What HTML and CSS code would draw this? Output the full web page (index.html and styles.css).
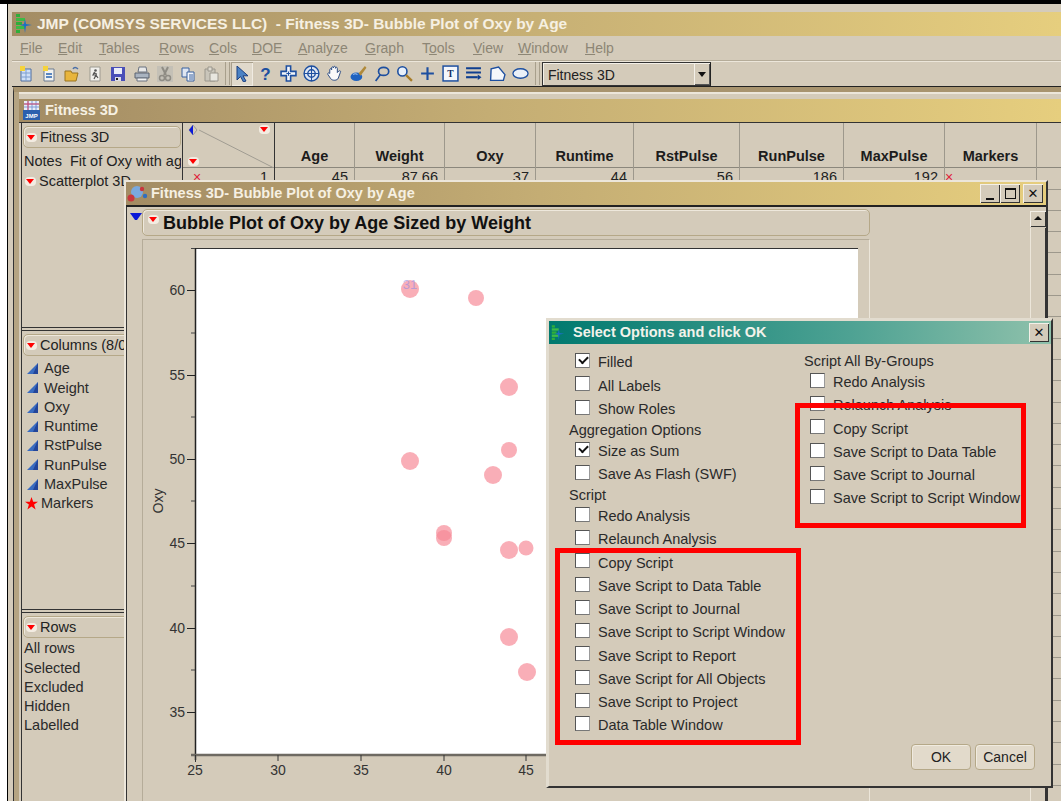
FILE: index.html
```html
<!DOCTYPE html>
<html lang="en">
<head>
<meta charset="utf-8">
<title>JMP - Fitness 3D</title>
<link rel="stylesheet" href="styles.css">
</head>
<body>
<svg class="defs" width="0" height="0" aria-hidden="true">
  <defs>
    <symbol id="jmp-logo" viewBox="0 0 18 20">
      <rect x="1" y="0" width="4" height="3" fill="#2fae3a"/><rect x="1" y="4" width="9" height="3" fill="#3dbb45"/>
      <rect x="1" y="8" width="6" height="3" fill="#2fae3a"/><rect x="1" y="12" width="9" height="3" fill="#3dbb45"/>
      <rect x="1" y="16" width="4" height="3" fill="#2fae3a"/>
      <path d="M10 5 11 10 17 11 11 12 10 19 9 12 5 11 9 10Z" fill="#1c6fc4"/>
    </symbol>
    <symbol id="ramp" viewBox="0 0 13 13">
      <path d="M12 1V12H1Z" fill="#3a6cc0"/><path d="M12 1V12H7Z" fill="#23459a"/>
    </symbol>
  </defs>
</svg>

<div class="top-edge"></div>
<div class="app">
  <div class="titlebar app-title">
    <svg class="logo"><use href="#jmp-logo"/></svg>
    <span>JMP (COMSYS SERVICES LLC)&nbsp; - Fitness 3D- Bubble Plot of Oxy by Age</span>
  </div>
  <nav class="menubar">
    <span class="m-file"><u>F</u>ile</span><span class="m-edit"><u>E</u>dit</span><span class="m-tables"><u>T</u>ables</span><span class="m-rows"><u>R</u>ows</span><span class="m-cols"><u>C</u>ols</span><span class="m-doe"><u>D</u>OE</span><span class="m-analyze"><u>A</u>nalyze</span><span class="m-graph"><u>G</u>raph</span><span class="m-tools">T<u>o</u>ols</span><span class="m-view"><u>V</u>iew</span><span class="m-window"><u>W</u>indow</span><span class="m-help"><u>H</u>elp</span>
  </nav>
  <div class="toolbar">
    <div class="tools">
      <svg viewBox="0 0 16 16"><path d="M3 3h10v12H3Z" fill="#cfe0f5" stroke="#4f6f9f"/><path d="M3 7h10M3 11h10M8 3v12" stroke="#7f9fd0"/><path d="M2 0h5v5H2Z" fill="#f5d33c"/></svg>
      <svg viewBox="0 0 16 16"><path d="M3 3h10v12H3Z" fill="#f2f2ef" stroke="#6b7a90"/><path d="M5 8h6M5 11h6" stroke="#5a86c0" stroke-width="2"/><path d="M2 0h5v5H2Z" fill="#f5d33c"/></svg>
      <svg viewBox="0 0 16 16"><path d="M1 5h6l1 2h6l-2 8H1Z" fill="#e8b53c" stroke="#9a7420"/><path d="M9 3c1-2 3-2 5 0" fill="none" stroke="#4a6fa8" stroke-width="1.4"/></svg>
      <svg viewBox="0 0 16 16"><path d="M3 1h10v14H3Z" fill="#f1f0ec" stroke="#9d9a90"/><circle cx="8.500" cy="4.500" r="1.300" fill="#555"/><path d="M8 6 6 9h3l-2 4M9 9l2 3M6 7l4 1" fill="none" stroke="#555" stroke-width="1.200"/></svg>
      <svg viewBox="0 0 16 16"><path d="M1 1h14v14H1Z" fill="#4a4fb8"/><path d="M4 2h8v6H4Z" fill="#e9ecf8"/><path d="M5 11h6v4H5Z" fill="#dcdce8"/><path d="M6 12h2v2H6Z" fill="#222"/></svg>
      <svg viewBox="0 0 16 16"><path d="M5 1h7l1 5H4Z" fill="#e8e8e8" stroke="#6a7280"/><path d="M1 7h14v5H1Z" fill="#a9b3c0" stroke="#5a6270"/><path d="M3 12h10v3H3Z" fill="#f2f2f2" stroke="#6a7280"/></svg>
      <svg viewBox="0 0 16 16"><rect x="0" y="0" width="16" height="16" fill="#c4c0b6"/><path d="M5 1 9 9M11 1 7 9" stroke="#8f8c84" stroke-width="2"/><circle cx="5" cy="12" r="2.500" fill="none" stroke="#8f8c84" stroke-width="1.500"/><circle cx="11" cy="12" r="2.500" fill="none" stroke="#8f8c84" stroke-width="1.500"/></svg>
      <svg viewBox="0 0 16 16"><path d="M2 2h7v9H2Z" fill="#dfe6f2" stroke="#38609f"/><path d="M7 6h7v9H7Z" fill="#f5f7fb" stroke="#38609f"/><path d="M9 9h4M9 11h4M9 13h4" stroke="#38609f"/></svg>
      <svg viewBox="0 0 16 16"><path d="M2 3h10v12H2Z" fill="#c9c5ba" stroke="#9a968c"/><path d="M5 1h4v4H5Z" fill="#dedad0" stroke="#9a968c"/><path d="M7 7h8v8H7Z" fill="#e8e6df" stroke="#9a968c"/></svg>
    </div>
    <div class="tool-sep"></div>
    <div class="tools tools-b">
      <div class="tool-on"><svg viewBox="0 0 16 16"><path d="M3 0V14L6.500 10.500 9.500 16 12 15 9 9.800H14Z" fill="#4b82c4" stroke="#1c3f80"/></svg></div>
      <svg viewBox="0 0 16 16"><text class="ico-q" x="8" y="14" text-anchor="middle">?</text></svg>
      <svg viewBox="0 0 16 16"><path d="M6 1h4v5h5v4h-5v5H6v-5H1V6h5Z" fill="#f4f7fb" stroke="#1d4fa0" stroke-width="1.500"/><path d="M8 6v4M6 8h4" stroke="#1d4fa0"/></svg>
      <svg viewBox="0 0 16 16"><circle cx="8" cy="8" r="7" fill="#dde6f3" stroke="#1d4fa0" stroke-width="1.300"/><circle cx="8" cy="8" r="3.500" fill="none" stroke="#1d4fa0" stroke-width="1.300"/><path d="M8 1v14M1 8h14" stroke="#1d4fa0"/></svg>
      <svg viewBox="0 0 18 18"><path d="M4 9V5c0-1.500 2-1.500 2 0V3c0-1.500 2-1.500 2 0V2.500c0-1.500 2-1.500 2 0V3.500c0-1.500 2-1.500 2 0V8l1.500-1.500c1.200-1 2.500 0 1.700 1.300L13 14c-1 2.500-6 3-8 .5L2 10c-.8-1.300 1-2.300 2-1Z" fill="#fafafa" stroke="#23457f"/></svg>
      <svg viewBox="0 0 16 16"><ellipse cx="6" cy="11" rx="5.500" ry="4" fill="#1f62c0"/><path d="M8 8 14 1l1.500 1.500L10 10Z" fill="#b08a3a"/><path d="M3 9c1-1 3-1 4 0" stroke="#9fc3ee" fill="none"/></svg>
      <svg viewBox="0 0 16 16"><ellipse cx="10" cy="6" rx="4.800" ry="3.800" fill="none" stroke="#1d4fa0" stroke-width="1.600"/><path d="M7 9 2.500 15" stroke="#1d4fa0" stroke-width="1.600"/></svg>
      <svg viewBox="0 0 16 16"><circle cx="6" cy="6" r="4.300" fill="#e8f0fa" stroke="#1d4fa0" stroke-width="1.500"/><path d="M9.500 9.500 15 15" stroke="#a87c28" stroke-width="2.200"/></svg>
      <svg viewBox="0 0 16 16"><path d="M8 2v12M2 8h12" stroke="#1d4fa0" stroke-width="2"/></svg>
      <svg viewBox="0 0 16 16"><rect x="1" y="1" width="14" height="14" fill="#f3f6fb" stroke="#1d4fa0" stroke-width="1.400"/><text class="ico-t" x="8" y="11.500" text-anchor="middle">T</text></svg>
      <svg viewBox="0 0 16 16"><path d="M1 3h14M1 7h14" stroke="#0f3f90" stroke-width="2"/><path d="M1 11.500h11" stroke="#0f3f90" stroke-width="2"/><path d="M12 9v5l3.500-2.500Z" fill="#0f3f90"/></svg>
      <svg viewBox="0 0 16 16"><path d="M1.500 14.500 2 3.500 9 2l6 7-1.500 5.500Z" fill="#f4f7fb" stroke="#1d4fa0" stroke-width="1.300"/></svg>
      <svg viewBox="0 0 18 16"><ellipse cx="9" cy="8" rx="8" ry="5" fill="#eaf0f8" stroke="#1d4fa0" stroke-width="1.400"/></svg>
    </div>
    <div class="tool-sep tool-sep-b"></div>
    <div class="combo"><span class="combo-value">Fitness 3D</span><span class="combo-btn"></span></div>
  </div>

  <div class="desk">
    <div class="titlebar doc-title">
      <svg class="doc-icon" viewBox="0 0 17 19"><rect x="1" y="0" width="15" height="10" fill="#e8eef9"/><path d="M1 3h15M1 6h15M5 0v10M9 0v10M13 0v10" stroke="#7d9ad6"/><path d="M1 3h15M5 0v10" stroke="#d8466a"/><rect x="0" y="9" width="17" height="10" fill="#2b5fae"/><text class="ico-jmp" x="8.500" y="17" text-anchor="middle">JMP</text></svg>
      <span>Fitness 3D</span>
    </div>
    <div class="table-wrap">
      <aside class="side">
        <section class="side-sec sec-top">
          <h3 class="side-head"><i class="pop"></i>Fitness 3D</h3>
          <p class="side-line notes">Notes&nbsp; Fit of Oxy with age</p>
          <p class="side-line script-line"><i class="pop"></i>Scatterplot 3D</p>
        </section>
        <section class="side-sec sec-cols">
          <h3 class="side-head"><i class="pop"></i>Columns (8/0)</h3>
          <ul class="col-list">
            <li><svg class="ramp"><use href="#ramp"/></svg>Age</li>
            <li><svg class="ramp"><use href="#ramp"/></svg>Weight</li>
            <li><svg class="ramp"><use href="#ramp"/></svg>Oxy</li>
            <li><svg class="ramp"><use href="#ramp"/></svg>Runtime</li>
            <li><svg class="ramp"><use href="#ramp"/></svg>RstPulse</li>
            <li><svg class="ramp"><use href="#ramp"/></svg>RunPulse</li>
            <li><svg class="ramp"><use href="#ramp"/></svg>MaxPulse</li>
            <li><svg class="ramp star" viewBox="0 0 14 14"><path d="M7 0 8.800 5H14L9.800 8.200 11.400 13.500 7 10.300 2.600 13.500 4.200 8.200 0 5H5.200Z" fill="#f00"/></svg>Markers</li>
          </ul>
        </section>
        <section class="side-sec sec-rows">
          <h3 class="side-head"><i class="pop"></i>Rows</h3>
          <ul class="row-list">
            <li>All rows</li><li>Selected</li><li>Excluded</li><li>Hidden</li><li>Labelled</li>
          </ul>
        </section>
      </aside>
      <div class="sheet">
        <div class="sheet-row sheet-head">
          <div class="corner">
            <svg viewBox="0 0 92 45" width="92" height="45"><path d="M16 7 91 45" stroke="#a09c92"/><path d="M6 7 10 2 14 7 10 12Z" fill="#d4cbba" stroke="#999"/><path d="M6 7 10 2V12Z" fill="#0a18d8"/></svg>
            <i class="pop pop-tr"></i><i class="pop pop-bl"></i>
          </div>
          <div>Age</div><div>Weight</div><div>Oxy</div><div>Runtime</div><div>RstPulse</div><div>RunPulse</div><div>MaxPulse</div><div>Markers</div><div></div>
        </div>
        <div class="sheet-row sheet-data">
          <div class="row-no"><em>×</em>1</div><div>45</div><div>87.66</div><div>37</div><div>44</div><div>56</div><div>186</div><div>192</div><div class="marker">×</div><div></div>
        </div>
      </div>
    </div>
  </div>
</div>

<div class="bubble-win">
  <div class="titlebar bubble-title">
    <svg class="bubble-icon" viewBox="0 0 22 18"><circle cx="10" cy="7" r="6" fill="#7aa9de"/><circle cx="4" cy="13" r="3.500" fill="#c9373d"/><circle cx="15" cy="4" r="2.200" fill="#c9373d"/><circle cx="18" cy="11" r="2.200" fill="#2f6fc0"/></svg>
    <span>Fitness 3D- Bubble Plot of Oxy by Age</span>
    <div class="win-btns">
      <button class="win-btn" type="button"><i class="glyph-min"></i></button><button class="win-btn" type="button"><i class="glyph-max"></i></button><button class="win-btn win-close" type="button">✕</button>
    </div>
  </div>
  <div class="bubble-body">
    <div class="disclose"><i></i></div>
    <div class="report">
      <h2 class="report-head"><i class="pop"></i>Bubble Plot of Oxy by Age Sized by Weight</h2>
      <div class="plot-panel">
        <svg class="plot" viewBox="0 0 729 560" width="729" height="560">
          <rect x="52" y="8" width="663" height="506" fill="#fff"/>
          <path d="M50 8.500H715" stroke="#333"/>
          <path d="M52.500 8V520" stroke="#222" stroke-width="1.500"/>
          <path d="M48 515H715" stroke="#6e6a62" stroke-width="2.500"/>
          <path d="M44 50.500h8M44 135.500h8M44 219.500h8M44 303.500h8M44 388.500h8M44 472.500h8" stroke="#222"/>
          <path d="M48 8.500h4M48 93h4M48 177h4M48 261h4M48 346h4M48 430h4" stroke="#444"/>
          <path d="M52.500 515v7M135 515v6M218 515v6M301 515v6M383 515v6" stroke="#333"/>
          <g class="bubbles">
            <circle cx="267" cy="49" r="9"/><circle cx="333" cy="58" r="8"/>
            <circle cx="366" cy="147" r="9"/><circle cx="366" cy="210" r="8"/>
            <circle cx="267" cy="221" r="9"/><circle cx="350" cy="235" r="9"/>
            <circle cx="301" cy="293" r="8"/><circle cx="301" cy="298" r="8"/>
            <circle cx="366" cy="310" r="9"/><circle cx="383" cy="308" r="7.500"/>
            <circle cx="366" cy="397" r="9"/><circle cx="384" cy="432" r="9"/>
          </g>
          <text class="point-label" x="267" y="49" text-anchor="middle">31</text>
          <g class="tick-y" text-anchor="end">
            <text x="42" y="55">60</text><text x="42" y="140">55</text><text x="42" y="224">50</text><text x="42" y="308">45</text><text x="42" y="393">40</text><text x="42" y="477">35</text>
          </g>
          <g class="tick-x" text-anchor="middle">
            <text x="52" y="535">25</text><text x="135" y="535">30</text><text x="218" y="535">35</text><text x="301" y="535">40</text><text x="383" y="535">45</text>
          </g>
          <text class="tick-y" transform="translate(20 261) rotate(-90)" text-anchor="middle">Oxy</text>
        </svg>
      </div>
    </div>
    <div class="scroll-col">
      <div class="scroll-up"></div>
      <div class="scroll-track"></div>
    </div>
  </div>
</div>

<div class="dialog">
  <div class="dialog-title">
    <svg class="dialog-logo"><use href="#jmp-logo"/></svg>
    <span>Select Options and click OK</span>
    <button class="win-btn dlg-close" type="button">✕</button>
  </div>
  <div class="dialog-cols">
    <div class="opt-col">
      <label class="opt"><i class="cb on"></i>Filled</label>
      <label class="opt"><i class="cb"></i>All Labels</label>
      <label class="opt"><i class="cb"></i>Show Roles</label>
      <div class="opt-head">Aggregation Options</div>
      <label class="opt"><i class="cb on"></i>Size as Sum</label>
      <label class="opt"><i class="cb"></i>Save As Flash (SWF)</label>
      <div class="opt-head">Script</div>
      <label class="opt"><i class="cb"></i>Redo Analysis</label>
      <label class="opt"><i class="cb"></i>Relaunch Analysis</label>
      <label class="opt"><i class="cb"></i>Copy Script</label>
      <label class="opt"><i class="cb"></i>Save Script to Data Table</label>
      <label class="opt"><i class="cb"></i>Save Script to Journal</label>
      <label class="opt"><i class="cb"></i>Save Script to Script Window</label>
      <label class="opt"><i class="cb"></i>Save Script to Report</label>
      <label class="opt"><i class="cb"></i>Save Script for All Objects</label>
      <label class="opt"><i class="cb"></i>Save Script to Project</label>
      <label class="opt"><i class="cb"></i>Data Table Window</label>
    </div>
    <div class="opt-col opt-col-b">
      <div class="opt-head">Script All By-Groups</div>
      <label class="opt"><i class="cb"></i>Redo Analysis</label>
      <label class="opt"><i class="cb"></i>Relaunch Analysis</label>
      <label class="opt"><i class="cb"></i>Copy Script</label>
      <label class="opt"><i class="cb"></i>Save Script to Data Table</label>
      <label class="opt"><i class="cb"></i>Save Script to Journal</label>
      <label class="opt"><i class="cb"></i>Save Script to Script Window</label>
    </div>
  </div>
  <div class="dialog-actions">
    <button class="btn" type="button">OK</button>
    <button class="btn" type="button">Cancel</button>
  </div>
  <div class="callout callout-a"></div>
  <div class="callout callout-b"></div>
</div>
</body>
</html>
```

FILE: styles.css
```css
* { box-sizing: border-box; }

html, body {
  margin: 0;
  height: 801px;
  overflow: hidden;
}

body {
  position: relative;
  width: 1061px;
  background: #fff;
  font: 14.5px/1 "Liberation Sans", Arial, sans-serif;
  color: #222;
}

h2, h3, p, ul { margin: 0; padding: 0; list-style: none; font-weight: normal; }
i, em { font-style: normal; }

.defs { position: absolute; }

.top-edge { height: 4px; background: #000; }

/* Main application frame */
.app {
  margin-left: 7px;
  height: 797px;
  padding: 8px 0 0 4px;
  background: #d4cbba;
  border-left: 1px solid #000;
}

.titlebar {
  display: flex;
  align-items: center;
  font-weight: bold;
  color: #f6f0e2;
  background: linear-gradient(90deg, #a38c64 0%, #c4ad74 45%, #e6ce7e 100%);
}

.app-title { height: 24px; font-size: 15.5px; gap: 4px; padding-left: 3px; }
.logo { width: 18px; height: 20px; }

.menubar {
  display: flex;
  height: 25px;
  align-items: center;
  color: #8d8675;
  font-size: 14px;
  border-bottom: 1px solid #b5ac99;
  box-shadow: 0 1px 0 #ece6da;
}
.menubar span { display: block; }
.m-file { margin-left: 8px; width: 38px; }
.m-edit { width: 41px; }
.m-tables { width: 60px; }
.m-rows { width: 50px; }
.m-cols { width: 43px; }
.m-doe { width: 46px; }
.m-analyze { width: 67px; }
.m-graph { width: 57px; }
.m-tools { width: 51px; }
.m-view { width: 45px; }
.m-window { width: 67px; }

.toolbar {
  display: flex;
  align-items: center;
  height: 26px;
  padding-left: 2px;
  border-bottom: 1px solid #222;
}
.tools { display: flex; align-items: center; }
.tools > svg { width: 16px; height: 16px; margin: 0 3.6px; }
.tools-b > svg { width: 17px; height: 17px; margin: 0 3.1px; }
.tool-sep { width: 5px; height: 23px; margin: 0 1px 0 2px; border-left: 1px solid #a89f8c; border-right: 1px solid #a89f8c; }
.tool-sep-b { margin-left: 3px; margin-right: 2px; }
.tool-on { width: 22px; height: 24px; margin-right: 1px; display: flex; align-items: center; justify-content: center; background: #e0d9cb; box-shadow: inset 1px 1px 0 #a89f8c, inset -1px -1px 0 #f0ebe2; }
.tool-on svg { width: 16px; height: 16px; }
.ico-q { font: bold 16px "Liberation Sans", sans-serif; fill: #1d4fa0; }
.ico-t { font: bold 9px "Liberation Serif", serif; fill: #102a60; }
.ico-jmp { font: bold 6px "Liberation Sans", sans-serif; fill: #fff; }

.combo {
  display: flex;
  width: 169px;
  height: 24px;
  background: #d4cbba;
  border: 1px solid #333;
  border-right-color: #222;
  box-shadow: inset 1px 1px 0 #f4f0e8;
}
.combo-value { flex: 1; padding: 5px 0 0 5px; font-size: 14px; color: #222; }
.combo-btn {
  position: relative;
  width: 16px;
  background: #d4cbba;
  box-shadow: inset 1px 1px 0 #f4f0e8, inset -1px -1px 0 #555;
}
.combo-btn::after {
  content: "";
  position: absolute;
  left: 4px;
  top: 9px;
  border: 4px solid transparent;
  border-top: 5px solid #111;
  border-bottom: 0;
}

/* Data table document window */
.desk {
  height: 714px;
  margin-left: 1px;
  padding: 7px 0 0 6px;
  background: #d4cbba;
  border-left: 1px solid #333;
  border-top: 5px solid #a8946f;
  box-shadow: inset 5px 0 0 #b5a482, inset 0 2px 0 #ece6da;
}
.doc-title { height: 24px; margin-left: -1px; font-size: 14.500px; gap: 5px; padding-left: 4px; border-bottom: 1px solid #333; }
.doc-icon { width: 17px; height: 19px; }

.table-wrap { display: flex; height: 700px; border-left: 1px solid #333; margin-left: 1px; }
.side { width: 161px; flex: none; border-right: 1px solid #333; }
.side-sec { padding: 3px 1px 0 1px; }
.sec-top { height: 208px; border-bottom: 4px double #333; }
.sec-cols { height: 282px; border-bottom: 4px double #333; }
.side-head {
  display: flex;
  align-items: center;
  height: 22px;
  padding-left: 2px;
  font-size: 14.500px;
  color: #222;
  border: 1px solid #b5a888;
  border-radius: 5px;
  box-shadow: inset 1px 1px 0 #eee8dc;
}
.pop {
  position: relative;
  display: inline-block;
  flex: none;
  width: 11px;
  height: 9px;
  margin-right: 3px;
  background: #f3ece2;
  border-radius: 4px;
}
.pop::after {
  content: "";
  position: absolute;
  left: 1px;
  top: 2px;
  border: 4.500px solid transparent;
  border-top: 5px solid #f00;
  border-bottom: 0;
}
.side-line { height: 19px; padding-top: 2px; white-space: nowrap; overflow: hidden; }
.notes { margin-top: 4px; padding-left: 1px; height: 20px; }
.script-line { padding-left: 2px; }
.script-line .pop { margin-right: 3px; }

.col-list { padding: 3px 0 0 3px; }
.col-list li { display: flex; align-items: center; height: 19.280px; gap: 5px; color: #2a2a2a; }
.ramp { width: 13px; height: 13px; flex: none; }
.star { width: 13px; height: 13px; margin-right: -2px; margin-left: -1px; }

.row-list { padding: 1px 0 0 1px; }
.row-list li { height: 19.280px; display: flex; align-items: center; color: #2a2a2a; }

.sheet { flex: 1; overflow: hidden; background: repeating-linear-gradient(180deg, #d4cbba 0, #d4cbba 20.300px, #9d988c 20.300px, #9d988c 21.300px); background-position: 0 24px; }
.sheet-row { display: grid; grid-template-columns: 92px 80px 90px 91px 98px 106px 104px 101px 92px 40px; }
.sheet-row > div { border-right: 1px solid #9d988c; }
.sheet-head { height: 45px; background: #d4cbba; border-bottom: 1px solid #8b877c; font-weight: bold; font-size: 14.500px; color: #1c1c1c; }
.sheet-head > div { padding-top: 26px; text-align: center; }
.sheet-head > .corner { position: relative; padding: 0; border-right-color: #333; }
.corner svg { display: block; }
.pop-tr { position: absolute; left: 76px; top: 2px; }
.pop-bl { position: absolute; left: 5px; top: 34px; }
.sheet-data { height: 21px; background: #d4cbba; text-align: right; font-size: 14.500px; color: #222; }
.sheet-data > div { padding: 2px 6px 0 0; }
.sheet-data .row-no { border-right-color: #333; display: flex; justify-content: space-between; padding-left: 10px; }
.row-no em, .marker { color: #e0203a; font-size: 14px; }
.marker { text-align: left; padding-left: 12px; }

/* Bubble plot platform window */
.bubble-win {
  position: absolute;
  left: 124px;
  top: 180px;
  width: 924px;
  height: 621px;
  background: #d4cbba;
  border-top: 2px solid #ece6da;
  border-left: 2px solid #ece6da;
  border-right: 2px solid #333;
  display: flex;
  flex-direction: column;
  overflow: hidden;
}
.bubble-title { height: 25px; flex: none; font-size: 14.500px; gap: 2px; padding-left: 1px; border-bottom: 2px solid #222; }
.bubble-icon { width: 22px; height: 18px; }
.win-btns { display: flex; margin-left: auto; margin-right: 3px; gap: 0; }
.win-btn {
  display: flex;
  align-items: center;
  justify-content: center;
  width: 20px;
  height: 19px;
  padding: 0;
  background: #d4cbba;
  border: 0;
  box-shadow: inset 1px 1px 0 #f4f0e8, inset -1px -1px 0 #333;
  font: bold 13px "DejaVu Sans", sans-serif;
  color: #111;
}
.win-close { margin-left: 3px; }
.glyph-min { width: 8px; height: 2px; margin-top: 10px; background: #111; }
.glyph-max { width: 11px; height: 11px; border: 1px solid #111; border-top-width: 2px; }

.bubble-body { display: flex; flex: 1; border-left: 1px solid #333; min-height: 0; }
.disclose { width: 15px; flex: none; padding-top: 6px; }
.disclose i { display: block; margin-left: 3px; border: 5px solid transparent; border-top: 7px solid #0a18d8; border-bottom: 0; }
.report { width: 728px; flex: none; display: flex; flex-direction: column; }
.report-head {
  display: flex;
  align-items: center;
  height: 27px;
  margin-top: 2px;
  padding-left: 5px;
  font-size: 18px;
  font-weight: bold;
  color: #111;
  border: 1px solid #b5a888;
  border-radius: 5px;
  box-shadow: inset 1px 1px 0 #eee8dc;
}
.report-head .pop { margin: -6px 4px 0 0; }
.plot-panel { flex: 1; margin-top: 3px; border: 1px solid #b5ac99; border-right-color: #ece6da; border-bottom: 0; }
.plot { display: block; }
.bubbles circle { fill: #f68895; opacity: .68; }
.point-label { font: 13px "Liberation Sans", sans-serif; fill: #8a8ae8; opacity: .55; }
.tick-y, .tick-x { font: 14px "Liberation Sans", sans-serif; fill: #333; }

.scroll-col { margin-left: 160px; width: 16px; flex: none; padding-top: 4px; }
.scroll-up {
  position: relative;
  height: 16px;
  background: #d4cbba;
  box-shadow: inset 1px 1px 0 #f4f0e8, inset -1px -1px 0 #333;
}
.scroll-up::after {
  content: "";
  position: absolute;
  left: 4px;
  top: 5px;
  border: 4px solid transparent;
  border-bottom: 4px solid #111;
  border-top: 0;
}
.scroll-track { height: 580px; margin-top: 1px; box-shadow: inset 1px 0 0 #ece6da, inset -1px 0 0 #333; }

/* Options dialog */
.dialog {
  position: absolute;
  left: 546px;
  top: 318px;
  width: 507px;
  height: 470px;
  background: #d4cbba;
  border-top: 3px solid #e2dccf;
  border-left: 3px solid #e2dccf;
  border-right: 2px solid #333;
  border-bottom: 2px solid #333;
}
.dialog-title {
  display: flex;
  align-items: center;
  height: 23px;
  padding-left: 2px;
  gap: 8px;
  font-size: 14.500px;
  font-weight: bold;
  color: #f2f2ea;
  background: linear-gradient(90deg, #00796f 0%, #4ea293 60%, #8fc1ab 100%);
}
.dialog-logo { width: 14px; height: 20px; }
.dlg-close { margin-left: auto; margin-right: 2px; width: 20px; height: 19px; }

.dialog-cols { display: flex; }
.opt-col { width: 255px; padding: 7px 0 0 20px; }
.opt-col-b { flex: 1; padding: 8px 0 0 0; }
.opt {
  display: flex;
  align-items: center;
  gap: 8px;
  height: 23.250px;
  padding-left: 6px;
  color: #2a2a2a;
  white-space: nowrap;
}
.opt-col-b .opt { gap: 8px; }
.opt-head { height: 18.750px; display: flex; align-items: center; color: #2a2a2a; }
.cb {
  position: relative;
  flex: none;
  width: 15px;
  height: 15px;
  margin-top: -4px;
  background: #fff;
  border: 1px solid #555;
  border-right-color: #999;
  border-bottom-color: #777;
}
.on::after {
  content: "";
  position: absolute;
  left: 3px;
  top: 2px;
  width: 7px;
  height: 4px;
  border-left: 2px solid #111;
  border-bottom: 2px solid #111;
  transform: rotate(-45deg);
}

.dialog-actions {
  position: absolute;
  right: 16px;
  bottom: 16px;
  display: flex;
  gap: 4px;
}
.btn {
  width: 60px;
  height: 26px;
  padding: 0;
  font: 14px "Liberation Sans", sans-serif;
  color: #222;
  background: #e2dacb;
  border: 1px solid #b5a888;
  border-radius: 4px;
  box-shadow: inset 1px 1px 0 #f0ebe0;
}

.callout { position: absolute; border: 5px solid #f00; pointer-events: none; }
.callout-a { left: 6px; top: 227px; width: 246px; height: 197px; }
.callout-b { left: 246px; top: 82px; width: 231px; height: 125px; }
```
